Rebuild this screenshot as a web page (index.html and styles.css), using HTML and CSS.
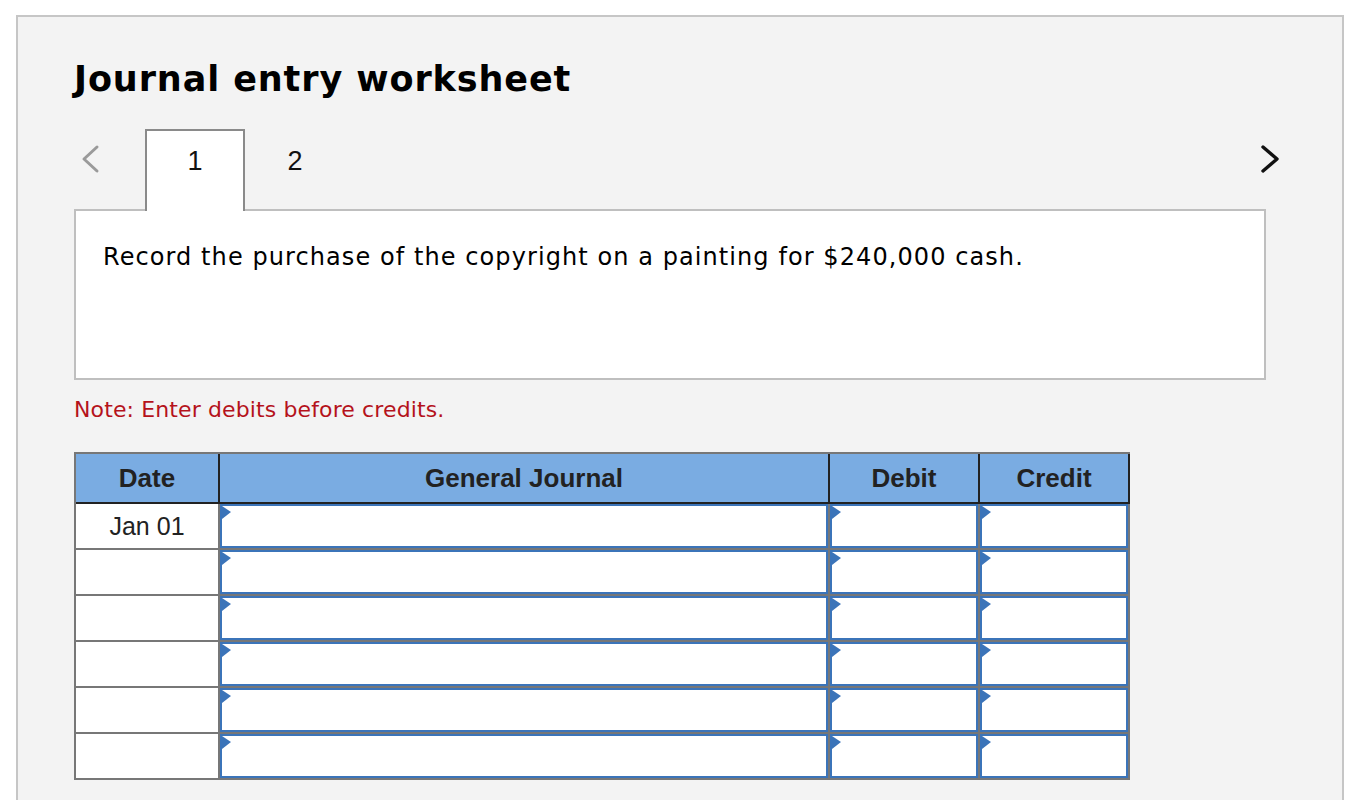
FILE: index.html
```html
<!DOCTYPE html>
<html>
<head>
<meta charset="utf-8">
<link rel="stylesheet" href="styles.css">
</head>
<body>
<div class="panel">
  <h1 class="title">Journal entry worksheet</h1>
  <div class="tabrow">
    <svg class="chev chev-left" width="30" height="81" viewBox="0 0 30 81"><polyline points="23,18 10,30 23,42" fill="none" stroke="#9a9a9a" stroke-width="3" stroke-linecap="round" stroke-linejoin="round"/></svg>
    <div class="tab tab-active">1</div>
    <div class="tab">2</div>
    <div class="spacer"></div>
    <svg class="chev" width="28" height="81" viewBox="0 0 28 81"><polyline points="7,18 21,30 7,42" fill="none" stroke="#111" stroke-width="3.4" stroke-linecap="round" stroke-linejoin="round"/></svg>
  </div>
  <div class="question">
    <p>Record the purchase of the copyright on a painting for $240,000 cash.</p>
  </div>
  <p class="note">Note: Enter debits before credits.</p>
  <div class="journal">
    <div class="hcell">Date</div>
    <div class="hcell">General Journal</div>
    <div class="hcell">Debit</div>
    <div class="hcell">Credit</div>

    <div class="dcell">Jan 01</div>
    <div class="bcell"><div class="field"></div></div>
    <div class="bcell"><div class="field"></div></div>
    <div class="bcell"><div class="field"></div></div>

    <div class="dcell"></div>
    <div class="bcell"><div class="field"></div></div>
    <div class="bcell"><div class="field"></div></div>
    <div class="bcell"><div class="field"></div></div>

    <div class="dcell"></div>
    <div class="bcell"><div class="field"></div></div>
    <div class="bcell"><div class="field"></div></div>
    <div class="bcell"><div class="field"></div></div>

    <div class="dcell"></div>
    <div class="bcell"><div class="field"></div></div>
    <div class="bcell"><div class="field"></div></div>
    <div class="bcell"><div class="field"></div></div>

    <div class="dcell"></div>
    <div class="bcell"><div class="field"></div></div>
    <div class="bcell"><div class="field"></div></div>
    <div class="bcell"><div class="field"></div></div>

    <div class="dcell"></div>
    <div class="bcell"><div class="field"></div></div>
    <div class="bcell"><div class="field"></div></div>
    <div class="bcell"><div class="field"></div></div>
  </div>
</div>
</body>
</html>
```
FILE: styles.css
```css
html, body {
  margin: 0;
  padding: 0;
  background: #ffffff;
  overflow: hidden;
}

.panel {
  margin: 15px 0 0 16px;
  width: 1268px;
  min-height: 820px;
  border: 2px solid #c6c6c6;
  border-bottom: none;
  background: #f3f3f3;
  padding: 0 0 0 56px;
}

.title {
  margin: 42px 0 0 0;
  font-family: "DejaVu Sans", Verdana, sans-serif;
  font-weight: bold;
  font-size: 35px;
  letter-spacing: 0.9px;
  line-height: 40px;
  color: #000;
}

.tabrow {
  display: flex;
  width: 1210px;
  height: 82px;
  margin-top: 30px;
  margin-bottom: -2px;
  position: relative;
  z-index: 1;
}

.chev {
  display: block;
  flex: none;
}

.chev-left {
  margin-right: 41px;
}

.tab {
  box-sizing: border-box;
  width: 100px;
  height: 82px;
  padding-top: 13px;
  text-align: center;
  font-family: "Liberation Sans", Arial, sans-serif;
  font-size: 27px;
  line-height: 34px;
  color: #111;
  border: 2px solid transparent;
  border-bottom: none;
}

.tab-active {
  background: #ffffff;
  border-color: #8a8a8a;
}

.spacer {
  flex: 1;
}

.question {
  box-sizing: border-box;
  width: 1192px;
  height: 171px;
  background: #ffffff;
  border: 2px solid #bfbfbf;
  padding: 31px 0 0 27px;
}

.question p {
  margin: 0;
  font-family: "DejaVu Sans", Verdana, sans-serif;
  font-size: 24px;
  letter-spacing: 1.08px;
  line-height: 30px;
  color: #000;
}

.note {
  margin: 16px 0 0 0;
  font-family: "DejaVu Sans", Verdana, sans-serif;
  font-size: 22px;
  letter-spacing: 0.12px;
  line-height: 28px;
  color: #b5121b;
}

.journal {
  display: grid;
  grid-template-columns: 144px 610px 150px 150px;
  grid-template-rows: 50px;
  grid-auto-rows: 46px;
  width: 1054px;
  margin-top: 28px;
  border-top: 2px solid #777777;
  border-left: 2px solid #777777;
}

.hcell {
  box-sizing: border-box;
  display: flex;
  align-items: center;
  justify-content: center;
  background: #7aace2;
  border-right: 2px solid #222;
  border-bottom: 2px solid #222;
  font-family: "Liberation Sans", Arial, sans-serif;
  font-weight: bold;
  font-size: 26px;
  color: #222;
}

.dcell {
  box-sizing: border-box;
  display: flex;
  align-items: center;
  justify-content: center;
  background: #ffffff;
  border-right: 2px solid #777777;
  border-bottom: 2px solid #777777;
  font-family: "Liberation Sans", Arial, sans-serif;
  font-size: 25px;
  color: #222;
}

.bcell {
  box-sizing: border-box;
  border-right: 2px solid #777777;
  border-bottom: 2px solid #777777;
  background: #ffffff;
}

.field {
  box-sizing: border-box;
  position: relative;
  height: 100%;
  border: 2px solid #3b74b9;
  background: #ffffff;
}

.field::before {
  content: "";
  position: absolute;
  left: 0;
  top: 0;
  width: 0;
  height: 0;
  border-left: 9px solid #3b74b9;
  border-top: 6px solid transparent;
  border-bottom: 7px solid transparent;
}
```
